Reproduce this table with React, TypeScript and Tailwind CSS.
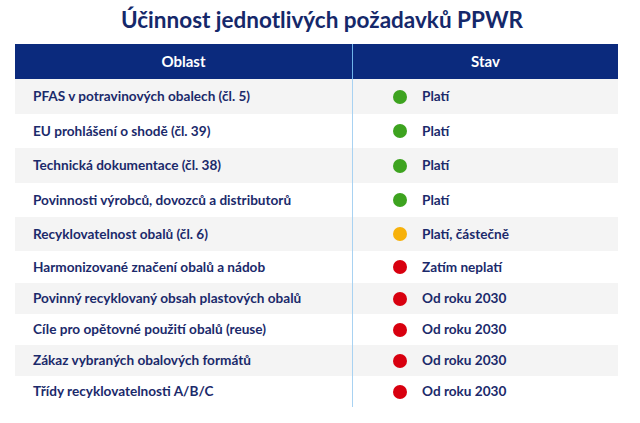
const rows = [
    { area: "PFAS v potravinových obalech (čl. 5)", status: "Platí", level: "ok", h: "h-[35px]" },
    { area: "EU prohlášení o shodě (čl. 39)", status: "Platí", level: "ok", h: "h-[34px]" },
    { area: "Technická dokumentace (čl. 38)", status: "Platí", level: "ok", h: "h-[35px]" },
    { area: "Povinnosti výrobců, dovozců a distributorů", status: "Platí", level: "ok", h: "h-[34px]" },
    { area: "Recyklovatelnost obalů (čl. 6)", status: "Platí, částečně", level: "partial", h: "h-[34px]" },
    { area: "Harmonizované značení obalů a nádob", status: "Zatím neplatí", level: "no", h: "h-[32px]" },
    { area: "Povinný recyklovaný obsah plastových obalů", status: "Od roku 2030", level: "no", h: "h-[31px]" },
    { area: "Cíle pro opětovné použití obalů (reuse)", status: "Od roku 2030", level: "no", h: "h-[31px]" },
    { area: "Zákaz vybraných obalových formátů", status: "Od roku 2030", level: "no", h: "h-[31px]" },
    { area: "Třídy recyklovatelnosti A/B/C", status: "Od roku 2030", level: "no", h: "h-[31px]" },
];

const dotColor: Record<string, string> = {
    ok: "bg-[#3da31f]",
    partial: "bg-[#f7b10a]",
    no: "bg-[#d8000f]",
};

export default function App() {
    return (
        <div className="w-[640px] h-[423px] bg-white font-['Lato',sans-serif] text-[#1b2a6b]">
            <h1 className="h-[44px] pt-[5px] pl-[4px] text-center text-[22.5px] font-bold leading-[30px] text-[#15286a]">
                Účinnost jednotlivých požadavků PPWR
            </h1>
            <div className="ml-[15px] w-[603px]">
                <div className="flex h-[35px] bg-[#0b2a7d] text-white text-[15px] font-bold">
                    <div className="w-[338px] flex items-center justify-center border-r border-[#6fb4ea]">Oblast</div>
                    <div className="flex-1 flex items-center justify-center">Stav</div>
                </div>
                {rows.map((row, i) => (
                    <div key={row.area} className={`flex ${row.h} text-[13.6px] font-bold ${i % 2 === 0 ? "bg-[#f4f4f4]" : "bg-white"}`}>
                        <div className="w-[338px] flex items-center pl-[18px] border-r border-[#a8d2f2]">{row.area}</div>
                        <div className="flex-1 flex items-center pl-[40px] gap-[15px]">
                            <span className={`w-[14px] h-[14px] rounded-full ${dotColor[row.level]}`}></span>
                            <span>{row.status}</span>
                        </div>
                    </div>
                ))}
            </div>
        </div>
    );
}
